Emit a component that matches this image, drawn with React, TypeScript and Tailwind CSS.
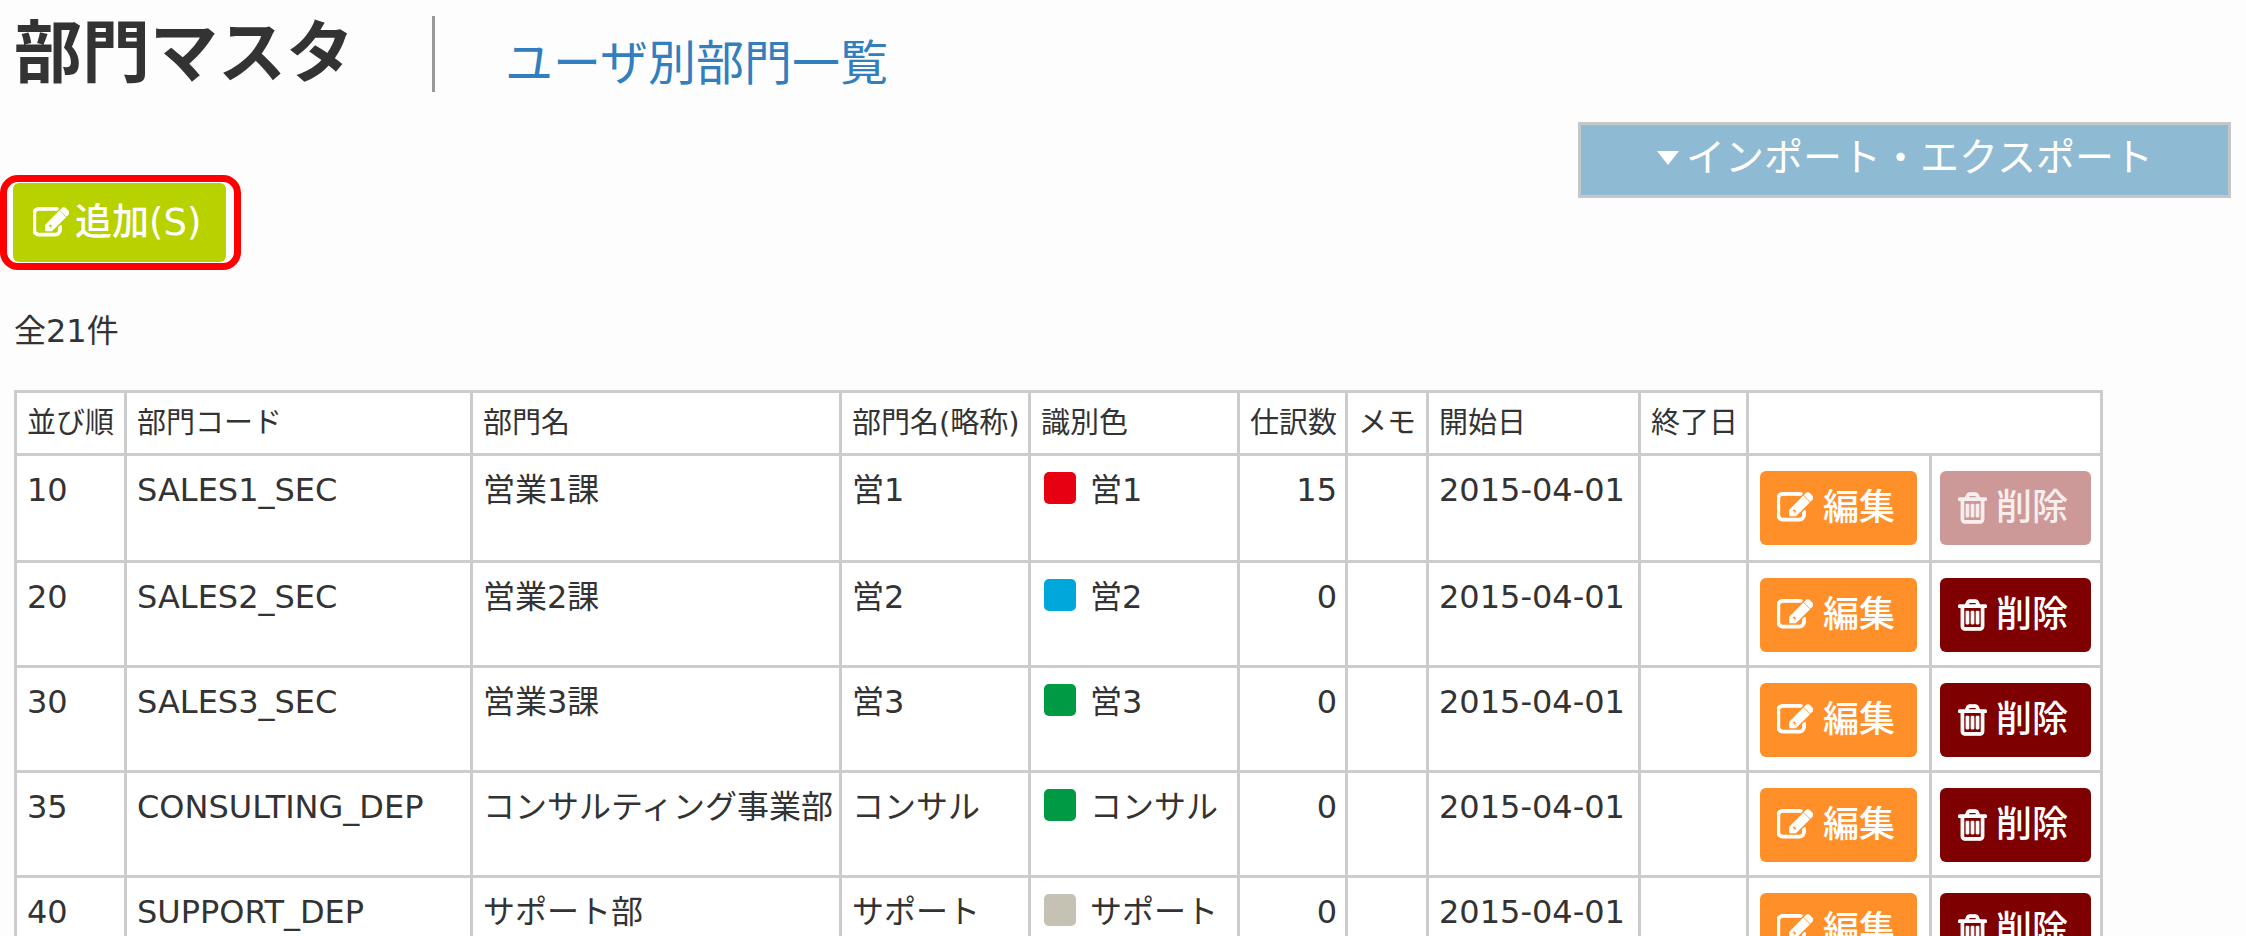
import React from "react";

type Department = {
  order: number;
  code: string;
  name: string;
  short: string;
  color: string;
  journals: number;
  start: string;
  locked?: boolean;
};

const departments: Department[] = [
  { order: 10, code: "SALES1_SEC", name: "営業1課", short: "営1", color: "bg-[#e60012]", journals: 15, start: "2015-04-01", locked: true },
  { order: 20, code: "SALES2_SEC", name: "営業2課", short: "営2", color: "bg-[#00a7db]", journals: 0, start: "2015-04-01" },
  { order: 30, code: "SALES3_SEC", name: "営業3課", short: "営3", color: "bg-[#009a44]", journals: 0, start: "2015-04-01" },
  { order: 35, code: "CONSULTING_DEP", name: "コンサルティング事業部", short: "コンサル", color: "bg-[#009a44]", journals: 0, start: "2015-04-01" },
  { order: 40, code: "SUPPORT_DEP", name: "サポート部", short: "サポート", color: "bg-[#c5c1b3]", journals: 0, start: "2015-04-01" },
];

function EditIcon() {
  return (
    <svg viewBox="0 0 1792 1792" className="size-9 shrink-0 fill-current stroke-current" strokeWidth="60" aria-hidden="true">
      <path d="M888 1184l116-116-152-152-116 116v56h96v96h56zm440-720q-16-16-33 1l-350 350q-17 17-1 33t33-1l350-350q17-17 1-33zm80 594v190q0 119-84.5 203.5t-203.5 84.5h-832q-119 0-203.5-84.5t-84.5-203.5v-832q0-119 84.5-203.5t203.5-84.5h832q63 0 117 25 15 7 18 23 3 17-9 29l-49 49q-14 14-32 8-23-6-45-6h-832q-66 0-113 47t-47 113v832q0 66 47 113t113 47h832q66 0 113-47t47-113v-126q0-13 9-22l64-64q15-15 35-7t20 29zm-96-738l288 288-672 672h-288v-288zm444 132l-92 92-288-288 92-92q28-28 68-28t68 28l152 152q28 28 28 68t-28 68z" />
    </svg>
  );
}

function TrashIcon() {
  return (
    <svg viewBox="160 96 1472 1600" className="h-8 w-[29px] shrink-0 fill-current stroke-current" strokeWidth="60" aria-hidden="true">
      <path d="M704 736v576q0 14-9 23t-23 9h-64q-14 0-23-9t-9-23v-576q0-14 9-23t23-9h64q14 0 23 9t9 23zm256 0v576q0 14-9 23t-23 9h-64q-14 0-23-9t-9-23v-576q0-14 9-23t23-9h64q14 0 23 9t9 23zm256 0v576q0 14-9 23t-23 9h-64q-14 0-23-9t-9-23v-576q0-14 9-23t23-9h64q14 0 23 9t9 23zm128 724v-948h-896v948q0 22 7 40.5t14.5 27 10.5 8.5h832q3 0 10.5-8.5t14.5-27 7-40.5zm-672-1076h448l-48-117q-7-9-17-11h-317q-10 2-17 11zm928 32v64q0 14-9 23t-23 9h-96v948q0 83-47 143.5t-113 60.5h-832q-66 0-113-58.5t-47-141.5v-952h-96q-14 0-23-9t-9-23v-64q0-14 9-23t23-9h309l70-167q15-37 54-63t79-26h320q40 0 79 26t54 63l70 167h309q14 0 23 9t9 23z" />
    </svg>
  );
}

const th = "border-3 border-[#ccc] pl-[10px] text-left font-normal";
const td = "border-3 border-[#ccc] pl-[10px] pt-[10px] align-top";
const action = "border-3 border-[#ccc] pt-[15px] pb-[13px] align-top";
const button = "flex h-[74px] items-center rounded-md font-medium text-white text-[36px] leading-[48px]";

export default function App() {
  return (
    <main className="h-screen overflow-hidden bg-[#fdfdfd] font-['DejaVu_Sans','Noto_Sans_CJK_JP',sans-serif] text-[#333] whitespace-nowrap">
      <header className="flex h-[108px] items-center pl-[14px]">
        <h1 className="text-[68px] leading-[106px] font-bold">部門マスタ</h1>
        <div className="ml-[78px] h-[76px] w-[3px] bg-[#999]" />
        <a href="#users" className="mt-[17px] ml-[70px] text-[48px] leading-[60px] text-[#337fbd]">
          ユーザ別部門一覧
        </a>
      </header>

      <div className="flex items-start justify-between pr-[15px]">
        <div className="mt-[67px] rounded-[18px] border-[7px] border-[#f00] bg-white py-px pr-2 pl-[6px]">
          <button type="button" className="flex h-[79px] items-center gap-[6px] rounded-md bg-[#b8d200] pr-[25px] pl-5 text-[37px] leading-[48px] font-medium text-white">
            <EditIcon />
            追加(S)
          </button>
        </div>
        <button type="button" className="mt-[14px] flex h-[76px] w-[653px] items-center justify-center gap-[6px] border-3 border-[#c4c6c7] bg-[#8fbad3] pb-1 text-[39px] leading-[48px] text-white">
          <svg viewBox="0 0 24 14" className="h-[14px] w-6 fill-current" aria-hidden="true">
            <path d="M1 0h22L12 14z" />
          </svg>
          インポート・エクスポート
        </button>
      </div>

      <p className="mt-[41px] pl-[14px] text-[32px] leading-10">全21件</p>

      <div className="mt-[39px] pl-[14px]">
        <table className="border-collapse bg-white text-[32px] leading-[48px]">
          <colgroup>
            <col className="w-[110px]" />
            <col className="w-[346px]" />
            <col className="w-[369px]" />
            <col className="w-[189px]" />
            <col className="w-[209px]" />
            <col className="w-[108px]" />
            <col className="w-[81px]" />
            <col className="w-[212px]" />
            <col className="w-[108px]" />
            <col className="w-[183px]" />
            <col className="w-[171px]" />
          </colgroup>
          <thead>
            <tr className="h-[63px] text-[29px] leading-10">
              <th scope="col" className={th}>並び順</th>
              <th scope="col" className={th}>部門コード</th>
              <th scope="col" className={th}>部門名</th>
              <th scope="col" className={th}>部門名(略称)</th>
              <th scope="col" className={th}>識別色</th>
              <th scope="col" className={th}>仕訳数</th>
              <th scope="col" className={th}>メモ</th>
              <th scope="col" className={th}>開始日</th>
              <th scope="col" className={th}>終了日</th>
              <td colSpan={2} className={th} />
            </tr>
          </thead>
          <tbody>
            {departments.map((d) => (
              <tr key={d.code} className="first:h-[107px]">
                <td className={td}>{d.order}</td>
                <td className={td}>{d.code}</td>
                <td className={td}>{d.name}</td>
                <td className={td}>{d.short}</td>
                <td className={td}>
                  <div className="flex items-center gap-[14px] pl-[3px]">
                    <span className={`mb-1 size-8 rounded-[5px] ${d.color}`} />
                    {d.short}
                  </div>
                </td>
                <td className={`${td} pr-2 text-right`}>{d.journals}</td>
                <td className={td} />
                <td className={td}>{d.start}</td>
                <td className={td} />
                <td className={`${action} pl-[11px]`}>
                  <button type="button" className={`${button} gap-[10px] bg-[#ff9029] pr-[22px] pl-[17px]`}>
                    <EditIcon />
                    編集
                  </button>
                </td>
                <td className={`${action} pl-2`}>
                  <button
                    type="button"
                    disabled={d.locked}
                    className={`${button} gap-[9px] bg-[#7f0000] pr-[23px] pl-[18px] disabled:bg-[#cc9898] disabled:text-[#f8eeee]`}
                  >
                    <TrashIcon />
                    削除
                  </button>
                </td>
              </tr>
            ))}
          </tbody>
        </table>
      </div>
    </main>
  );
}
